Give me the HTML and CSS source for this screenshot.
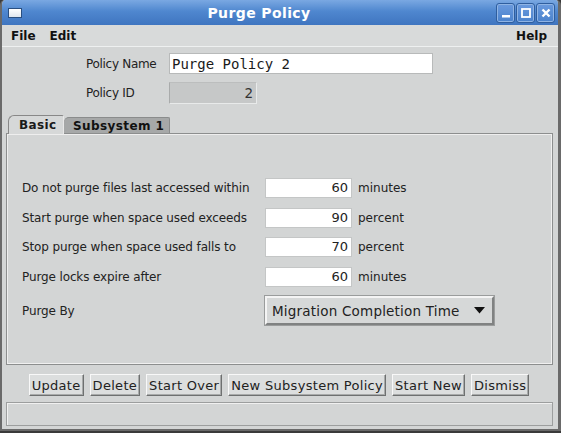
FILE: index.html
```html
<!DOCTYPE html>
<html>
<head>
<meta charset="utf-8">
<link rel="stylesheet" href="styles.css">
</head>
<body>
<div class="window">
  <div class="titlebar">
    <span class="winicon"></span>
    <span class="title">Purge Policy</span>
    <div class="tbtns">
      <span class="tbtn"><svg width="12" height="12" viewBox="0 0 12 12"><rect x="2" y="8" width="8" height="2.5" fill="#fff"/></svg></span>
      <span class="tbtn"><svg width="12" height="12" viewBox="0 0 12 12"><rect x="2" y="2" width="8" height="8" fill="none" stroke="#fff" stroke-width="1.8"/></svg></span>
      <span class="tbtn"><svg width="12" height="12" viewBox="0 0 12 12"><path d="M2.5 2.5 L9.5 9.5 M9.5 2.5 L2.5 9.5" stroke="#fff" stroke-width="2.4"/></svg></span>
    </div>
  </div>
  <div class="menubar">
    <span class="menu">File</span>
    <span class="menu">Edit</span>
    <span class="spacer"></span>
    <span class="menu">Help</span>
  </div>
  <div class="header">
    <div class="hrow">
      <span class="hlabel">Policy Name</span>
      <span class="field name">Purge Policy 2</span>
    </div>
    <div class="hrow">
      <span class="hlabel">Policy ID</span>
      <span class="field pid">2</span>
    </div>
  </div>
  <div class="tabs">
    <span class="tab active">Basic</span>
    <span class="tab">Subsystem 1</span>
  </div>
  <div class="panel">
    <div class="row">
      <span class="label">Do not purge files last accessed within</span>
      <span class="num">60</span>
      <span class="unit">minutes</span>
    </div>
    <div class="row">
      <span class="label">Start purge when space used exceeds</span>
      <span class="num">90</span>
      <span class="unit">percent</span>
    </div>
    <div class="row">
      <span class="label">Stop purge when space used falls to</span>
      <span class="num">70</span>
      <span class="unit">percent</span>
    </div>
    <div class="row">
      <span class="label">Purge locks expire after</span>
      <span class="num">60</span>
      <span class="unit">minutes</span>
    </div>
    <div class="row combo-row">
      <span class="label">Purge By</span>
      <span class="combo">Migration Completion Time <svg width="11" height="7" viewBox="0 0 11 7"><path d="M0 0 H11 L5.5 6.5 Z" fill="#111"/></svg></span>
    </div>
  </div>
  <div class="buttons">
    <span class="btn">Update</span>
    <span class="btn">Delete</span>
    <span class="btn">Start Over</span>
    <span class="btn">New Subsystem Policy</span>
    <span class="btn">Start New</span>
    <span class="btn">Dismiss</span>
  </div>
  <div class="status"></div>
</div>
</body>
</html>
```

FILE: styles.css
```css
html, body {
  margin: 0;
  padding: 0;
  background: #3a3a3a;
}
body {
  width: 561px;
  height: 433px;
  overflow: hidden;
  font-family: "DejaVu Sans", sans-serif;
  color: #1a1a1a;
}
.window {
  width: 561px;
  height: 431px;
  box-sizing: border-box;
  background: #d3d5d5;
  border-left: 2px solid #6a6a6a;
  border-right: 3px solid #6a6a6a;
  border-bottom: 2px solid #6a6a6a;
  border-radius: 5px 5px 0 0;
  display: flex;
  flex-direction: column;
  overflow: hidden;
}
.titlebar {
  height: 25px;
  margin: 0 -3px 0 -2px;
  background: linear-gradient(#7aa8e2, #4f87cf 45%, #3f75c0);
  border-radius: 5px 5px 0 0;
  display: flex;
  align-items: center;
  flex: none;
}
.winicon {
  width: 12px;
  height: 8px;
  margin-left: 8px;
  background: linear-gradient(#ffffff, #dfe6ee);
  border: 1px solid #2a4f80;
}
.title {
  flex: 1;
  text-align: center;
  color: #fff;
  font-weight: bold;
  font-size: 14px;
  padding-left: 0;
  letter-spacing: 0.4px;
}
.tbtns {
  display: flex;
  gap: 1px;
  margin-right: 6px;
}
.tbtn {
  width: 17px;
  height: 18px;
  border: 1px solid #2f5e9e;
  border-radius: 3px;
  box-shadow: inset 0 0 0 1px #8fb4e4;
  background: linear-gradient(#6a9ade, #4a82cc);
  display: flex;
  align-items: center;
  justify-content: center;
}
.menubar {
  height: 21px;
  display: flex;
  align-items: center;
  padding: 0 9px;
  background: #d8dada;
  border-bottom: 1px solid #eef0f0;
  flex: none;
}
.menu {
  font-weight: bold;
  font-size: 12px;
  margin-right: 14px;
  color: #111;
}
.menu:last-child { margin-right: 2px; }
.spacer { flex: 1; }
.header {
  padding-top: 6px;
  padding-left: 84px;
  display: flex;
  flex-direction: column;
  gap: 8px;
  flex: none;
}
.hrow {
  display: flex;
  align-items: center;
}
.hlabel {
  width: 83px;
  font-size: 12px;
  color: #222;
  letter-spacing: -0.3px;
}
.field {
  height: 21px;
  box-sizing: border-box;
  border: 1px solid #b8baba;
  font-size: 13.5px;
  display: flex;
  align-items: center;
}
.field.name {
  width: 264px;
  background: #fff;
  padding-left: 2px;
  font-family: "DejaVu Sans Mono", monospace;
  font-size: 14px;
}
.field.pid {
  width: 88px;
  height: 22px;
  background: #c6c8c8;
  justify-content: flex-end;
  padding-right: 3px;
  border-color: #bcbebe #e8eaea #e8eaea #a9abab;
  color: #333;
}
.tabs {
  display: flex;
  align-items: flex-end;
  margin-top: 11px;
  padding-left: 6px;
  height: 18px;
  flex: none;
}
.tab {
  font-weight: bold;
  font-size: 12px;
  box-sizing: border-box;
  display: flex;
  align-items: center;
  letter-spacing: 0.4px;
}
.tab.active {
  width: 56px;
  padding-left: 10px;
  background: #d6d8d8;
  border-top: 1px solid #888;
  border-left: 1px solid #888;
  border-right: 1px solid #e8e8e8;
  border-radius: 6px 2px 0 0;
  position: relative;
  z-index: 1;
  margin-bottom: -1px;
  height: 19px;
}
.tab:not(.active) {
  width: 106px;
  height: 16px;
  padding-left: 9px;
  background: #a6a8a8;
  border-top: 1px solid #8a8c8c;
  border-right: 1px solid #8a8c8c;
  border-radius: 5px 2px 0 0;
  color: #111;
}
.panel {
  margin: 0 5px 0 4px;
  height: 232px;
  box-sizing: border-box;
  border: 1px solid #8c8e8e;
  box-shadow: inset 1px 1px 0 #eeeeee, inset -1px -1px 0 #f0f0f0;
  padding: 44px 0 0 15px;
  display: flex;
  flex-direction: column;
  gap: 9.5px;
  flex: none;
}
.row {
  display: flex;
  align-items: center;
  height: 20px;
}
.label {
  width: 243px;
  font-size: 12px;
  color: #222;
  letter-spacing: -0.12px;
}
.num {
  width: 87px;
  height: 20px;
  box-sizing: border-box;
  background: #fff;
  border: 1px solid #c4c6c6;
  text-align: right;
  padding-right: 3px;
  font-size: 13px;
  line-height: 18px;
  color: #222;
}
.unit {
  margin-left: 6px;
  font-size: 12px;
  color: #222;
}
.combo-row {
  height: 29px;
}
.combo {
  width: 229px;
  height: 29px;
  box-sizing: border-box;
  border: 2px solid;
  border-color: #f4f4f4 #808282 #808282 #f4f4f4;
  outline: 1px solid #9a9c9c;
  background: #d6d8d8;
  display: flex;
  align-items: center;
  justify-content: space-between;
  padding: 0 7px 0 5px;
  font-size: 13.5px;
  color: #222;
  letter-spacing: 0.2px;
}
.buttons {
  display: flex;
  justify-content: center;
  gap: 6px;
  padding-top: 9px;
  padding-right: 2px;
  height: 22px;
  flex: none;
}
.btn {
  height: 22px;
  box-sizing: border-box;
  border: 1px solid;
  border-color: #f8f8f8 #6e7070 #6e7070 #f8f8f8;
  box-shadow: inset -1px -1px 0 #a8aaaa;
  background: #dcdede;
  font-size: 13px;
  letter-spacing: 0.3px;
  display: flex;
  align-items: center;
  padding: 0 2px;
  color: #222;
}
.status {
  margin: 6px 5px 0 4px;
  height: 24px;
  box-sizing: border-box;
  border: 1px solid #9c9e9e;
  box-shadow: inset 1px 1px 0 #f0f0f0;
  flex: none;
}
```
